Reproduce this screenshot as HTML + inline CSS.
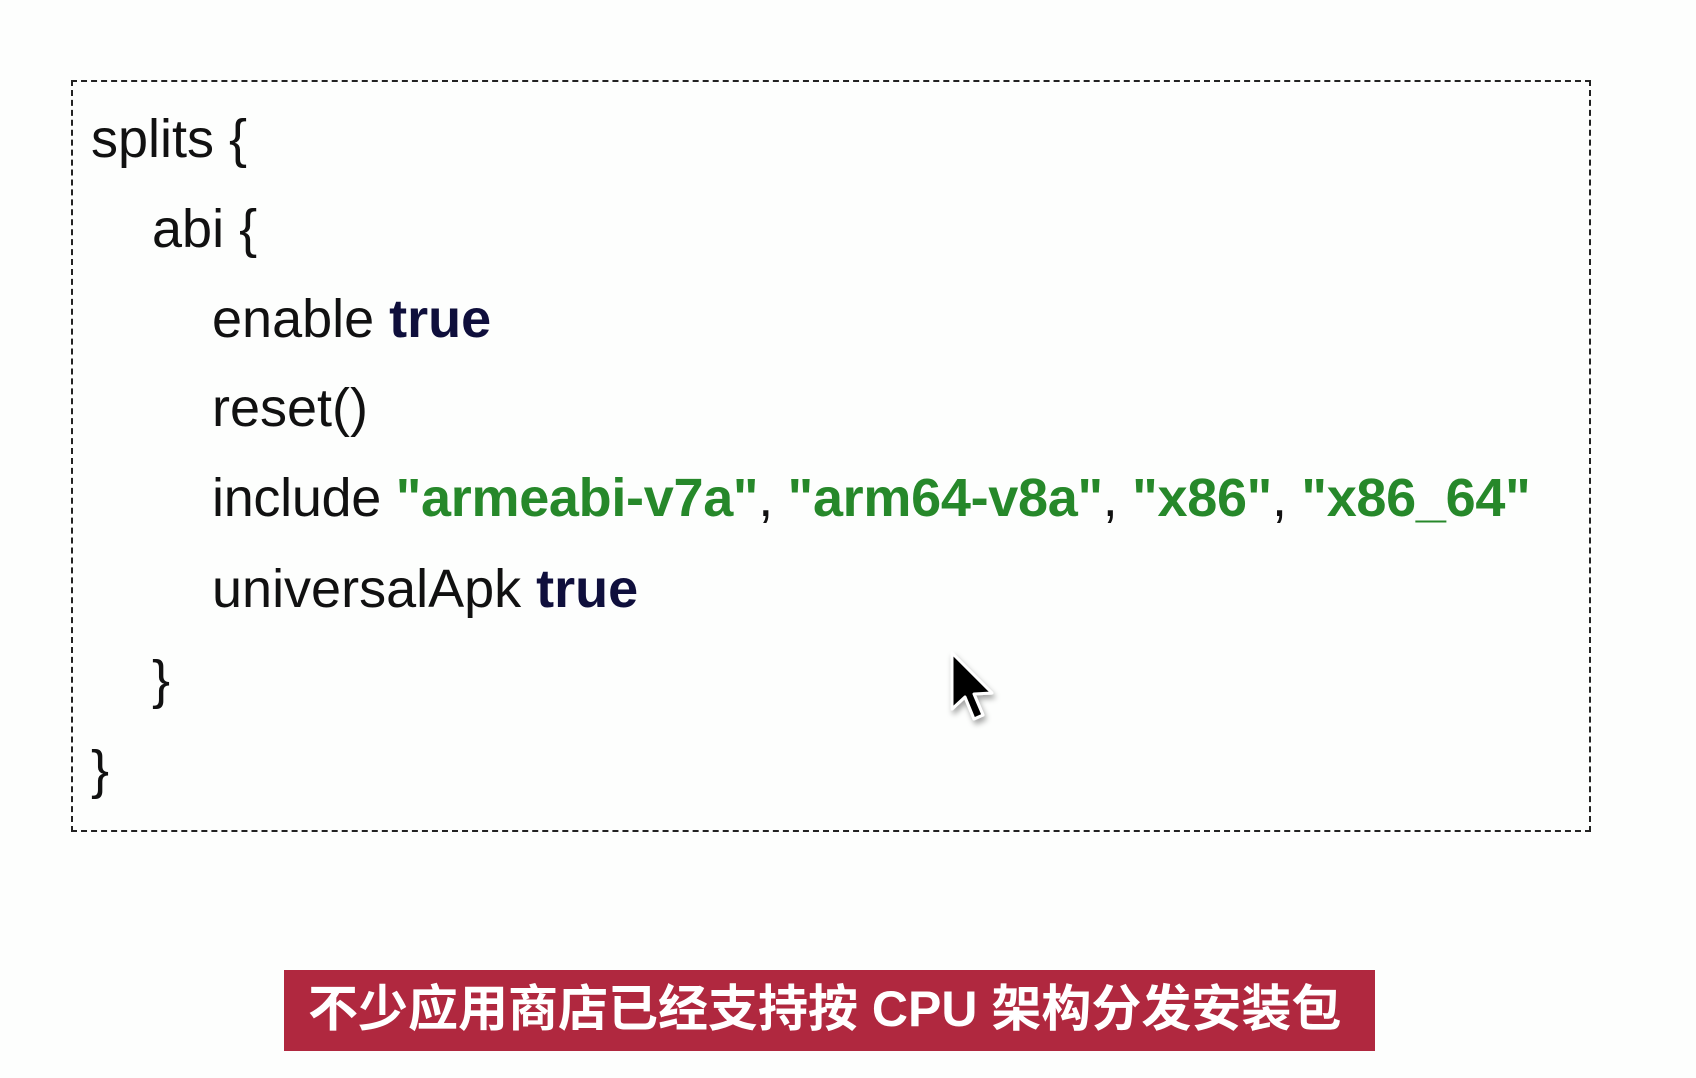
<!DOCTYPE html>
<html><head><meta charset="utf-8"><style>
html,body{margin:0;padding:0;}
body{width:1696px;height:1078px;background:#fdfefd;position:relative;overflow:hidden;font-family:"Liberation Sans","Noto Sans CJK SC",sans-serif;}
.box{position:absolute;left:71px;top:80px;width:1516px;height:748px;border:2px dashed #222;}
.l{position:absolute;font-size:54px;color:#111;white-space:nowrap;line-height:1;}
.g{color:#26882a;font-weight:bold;}
.t{color:#0f0f3c;font-weight:bold;}
.bar{position:absolute;left:284px;top:970px;width:1091px;height:81px;background:#b0283f;}
.bar span{position:absolute;left:24px;top:12px;font-size:50px;font-weight:bold;color:#fff;font-family:"Liberation Sans","Noto Sans CJK SC",sans-serif;white-space:nowrap;line-height:1.1;}
</style></head><body>
<div class="box"></div>
<div class="l" style="left:91px;top:112px">splits {</div>
<div class="l" style="left:152px;top:202px">abi {</div>
<div class="l" style="left:212px;top:292px">enable <span class="t">true</span></div>
<div class="l" style="left:212px;top:381px">reset()</div>
<div class="l" style="left:212px;top:471px;letter-spacing:-0.3px">include <span class="g">"armeabi-v7a"</span>, <span class="g">"arm64-v8a"</span>, <span class="g">"x86"</span>, <span class="g">"x86_64"</span></div>
<div class="l" style="left:212px;top:562px">universalApk <span class="t">true</span></div>
<div class="l" style="left:152px;top:653px">}</div>
<div class="l" style="left:91px;top:743px">}</div>
<svg style="position:absolute;left:940px;top:645px" width="70" height="95" viewBox="0 0 70 95">
<defs><filter id="s" x="-30%" y="-30%" width="160%" height="160%"><feDropShadow dx="2" dy="4" stdDeviation="3" flood-opacity="0.35"/></filter></defs>
<path d="M12 8 L12 64 L25 52 L34 74 L43 70 L34 49 L52 48 Z" fill="#000" stroke="#fff" stroke-width="3" stroke-linejoin="round" filter="url(#s)"/>
</svg>
<div class="bar"><span>不少应用商店已经支持按 CPU 架构分发安装包</span></div>
</body></html>
